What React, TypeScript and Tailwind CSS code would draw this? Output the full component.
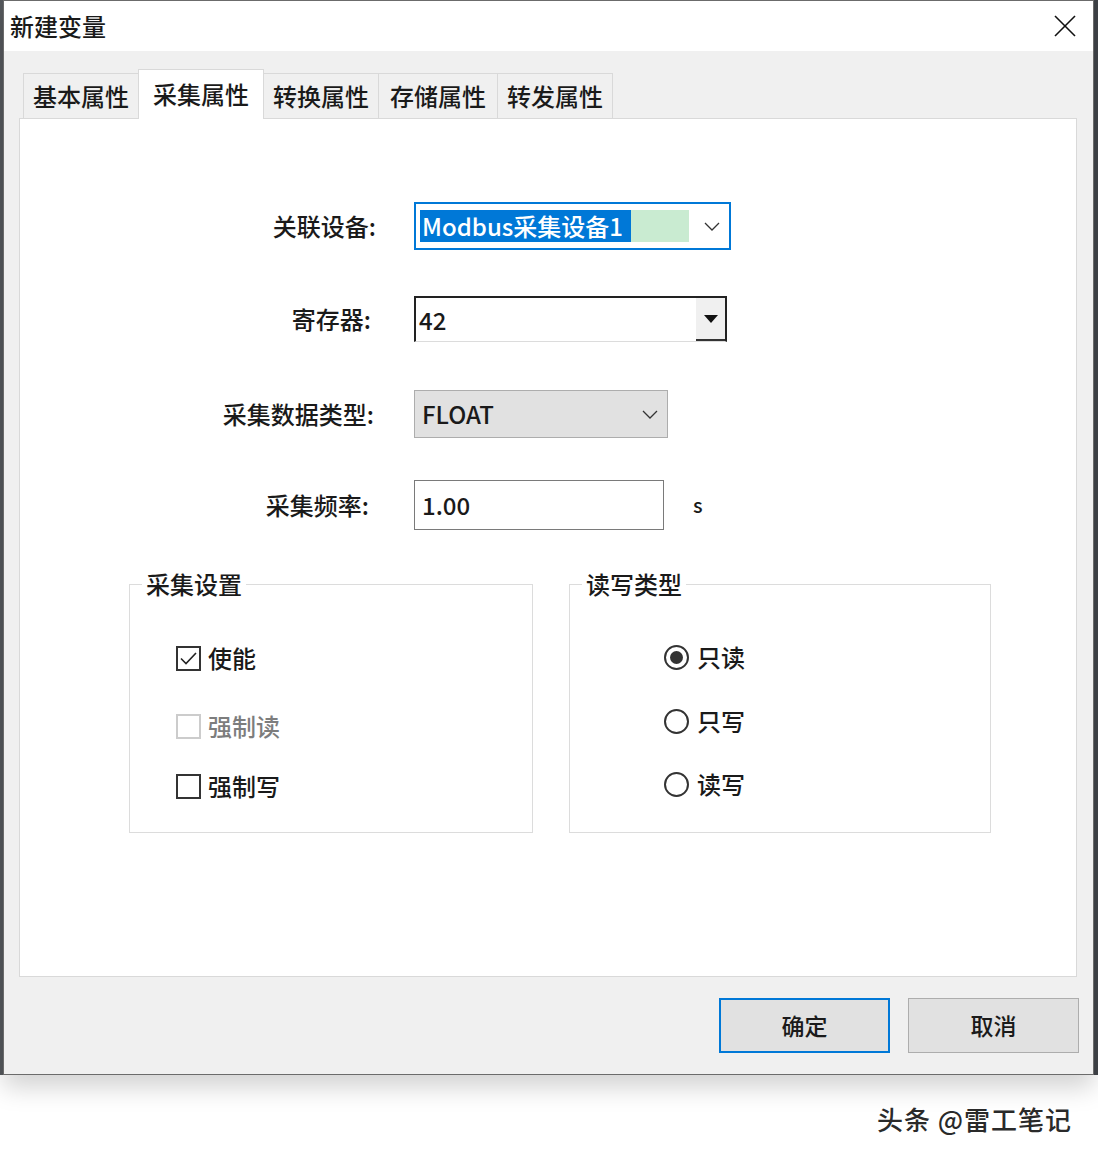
import React from 'react';

const tabs = [
  { label: '基本属性', w: 'w-[116px]' },
  { label: '采集属性', w: 'w-[126px]', active: true },
  { label: '转换属性', w: 'w-[116px]' },
  { label: '存储属性', w: 'w-[120px]' },
  { label: '转发属性', w: 'w-[116px]' },
];

const Chevron = ({ className = '' }: { className?: string }) => (
  <svg width="16" height="9" viewBox="0 0 16 9" className={className}>
    <polyline points="1,1 8,8 15,1" fill="none" stroke="#333" strokeWidth="1.3" />
  </svg>
);

const Checkbox = ({ checked, disabled, label }: { checked?: boolean; disabled?: boolean; label: string }) => (
  <div className="flex items-center h-[30px]">
    <div
      className={
        disabled
          ? 'w-[25px] h-[25px] border-2 border-[#cccccc] bg-white'
          : 'w-[25px] h-[25px] border-2 border-[#333333] bg-white flex items-center justify-center'
      }
    >
      {checked && (
        <svg width="19" height="19" viewBox="0 0 19 19">
          <polyline points="2,9.5 7,14.5 17,4" fill="none" stroke="#222" strokeWidth="1.6" />
        </svg>
      )}
    </div>
    <span className={disabled ? 'ml-[7px] text-[24px] text-[#7d7d7d]' : 'ml-[7px] text-[24px]'}>{label}</span>
  </div>
);

const Radio = ({ checked, label }: { checked?: boolean; label: string }) => (
  <div className="flex items-center h-[30px]">
    <div className="w-[25px] h-[25px] rounded-full border-2 border-[#333333] bg-white flex items-center justify-center">
      {checked && <div className="w-[13px] h-[13px] rounded-full bg-[#333333]" />}
    </div>
    <span className="ml-[8px] text-[24px]">{label}</span>
  </div>
);

export default function App() {
  return (
    <div className="w-[1098px] h-[1156px] bg-white text-[#1a1a1a] font-medium font-['Noto_Sans_CJK_SC',sans-serif] overflow-hidden">
      <div className="flex h-[1075px]">
        <div className="w-[3px] bg-[#55585c]" />
        <div className="w-[1091px] flex flex-col border border-[#6b6b6b] shadow-[0_12px_24px_rgba(0,0,0,0.18)]">
          {/* title bar */}
          <div className="h-[50px] bg-white flex items-center justify-between pl-[6px] pr-[16px]">
            <span className="text-[24px] leading-none">新建变量</span>
            <svg width="24" height="24" viewBox="0 0 24 24">
              <line x1="2" y1="2" x2="22" y2="22" stroke="#111" strokeWidth="1.6" />
              <line x1="22" y1="2" x2="2" y2="22" stroke="#111" strokeWidth="1.6" />
            </svg>
          </div>

          <div className="flex-1 bg-[#f0f0f0] pl-[15px] pr-[16px] pt-[18px] flex flex-col">
            {/* tabs */}
            <div className="flex items-end h-[50px] pl-[4px] -mb-px relative z-10">
              {tabs.map((t, i) => (
                <div
                  key={t.label}
                  className={
                    (t.active
                      ? 'h-[50px] bg-white relative z-10 pb-[2px] '
                      : 'h-[46px] bg-[#f0f0f0] border-b border-b-[#d9d9d9] ') +
                    t.w +
                    (i > 0 ? ' -ml-px' : '') +
                    ' border-t border-l border-r border-t-[#d9d9d9] border-l-[#d9d9d9] border-r-[#d9d9d9] flex items-center justify-center text-[24px]'
                  }
                >
                  {t.label}
                </div>
              ))}
            </div>

            {/* panel */}
            <div className="h-[859px] bg-white border border-[#d9d9d9] pt-[83px]">
              <div className="flex items-center h-[48px]">
                <div className="w-[356px] text-right text-[24px]">关联设备:</div>
                <div className="ml-[38px] w-[317px] h-[48px] border-2 border-[#0078d7] bg-white flex items-center pl-[4px] pr-[9px]">
                  <div className="h-[32px] bg-[#0078d7] text-white text-[24px] leading-[32px] pl-[2px] pr-[8px] whitespace-nowrap">
                    Modbus采集设备1
                  </div>
                  <div className="h-[32px] w-[58px] bg-[#c9ebd1]" />
                  <Chevron className="ml-auto" />
                </div>
              </div>

              <div className="flex items-center h-[46px] mt-[46px]">
                <div className="w-[351px] text-right text-[24px]">寄存器:</div>
                <div className="ml-[43px] w-[313px] h-[46px] bg-white border-t-2 border-l-2 border-r-2 border-[#222] border-b border-b-[#dcdcdc] flex items-stretch">
                  <div className="flex-1 text-[24px] pl-[3px] flex items-center">42</div>
                  <div className="w-[29px] bg-[#f0f0f0] border-b-2 border-b-[#333] flex items-center justify-center">
                    <svg width="14" height="8" viewBox="0 0 14 8">
                      <polygon points="0,0 14,0 7,8" fill="#111" />
                    </svg>
                  </div>
                </div>
              </div>

              <div className="flex items-center h-[48px] mt-[48px]">
                <div className="w-[354px] text-right text-[24px]">采集数据类型:</div>
                <div className="ml-[40px] w-[254px] h-[48px] bg-[#e1e1e1] border border-[#adadad] flex items-center justify-between pl-[7px] pr-[9px]">
                  <span className="text-[24px]">FLOAT</span>
                  <Chevron />
                </div>
              </div>

              <div className="flex items-center h-[50px] mt-[42px]">
                <div className="w-[349px] text-right text-[24px]">采集频率:</div>
                <div className="ml-[45px] w-[250px] h-[50px] bg-white border border-[#7a7a7a] flex items-center pl-[7px]">
                  <span className="text-[24px]">1.00</span>
                </div>
                <span className="ml-[29px] text-[20px]">s</span>
              </div>

              {/* group boxes */}
              <div className="flex mt-[54px] ml-[109px]">
                <div className="relative w-[404px] h-[249px] border border-[#dcdcdc] pl-[46px] pt-[58px]">
                  <span className="absolute -top-[18px] left-[12px] px-[4px] bg-white text-[24px] leading-[34px]">采集设置</span>
                  <Checkbox checked label="使能" />
                  <div className="mt-[38px]">
                    <Checkbox disabled label="强制读" />
                  </div>
                  <div className="mt-[30px]">
                    <Checkbox label="强制写" />
                  </div>
                </div>
                <div className="relative ml-[36px] w-[422px] h-[249px] border border-[#dcdcdc] pl-[94px] pt-[57px]">
                  <span className="absolute -top-[18px] left-[12px] px-[4px] bg-white text-[24px] leading-[34px]">读写类型</span>
                  <Radio checked label="只读" />
                  <div className="mt-[34px]">
                    <Radio label="只写" />
                  </div>
                  <div className="mt-[33px]">
                    <Radio label="读写" />
                  </div>
                </div>
              </div>
            </div>

            {/* buttons */}
            <div className="flex justify-end gap-[18px] mt-[21px]">
              <button className="w-[171px] h-[55px] bg-[#e1e1e1] border-2 border-[#0078d7] text-[23px]">确定</button>
              <button className="w-[171px] h-[55px] bg-[#e1e1e1] border border-[#adadad] text-[23px] -mr-[2px]">取消</button>
            </div>
          </div>
        </div>
        <div className="w-[4px] bg-[#3c3f44]" />
      </div>

      <div className="flex justify-end pr-[26px] pt-[24px]">
        <span className="text-[26px] text-[#2a2a2a] tracking-[1px]">头条 @雷工笔记</span>
      </div>
    </div>
  );
}
